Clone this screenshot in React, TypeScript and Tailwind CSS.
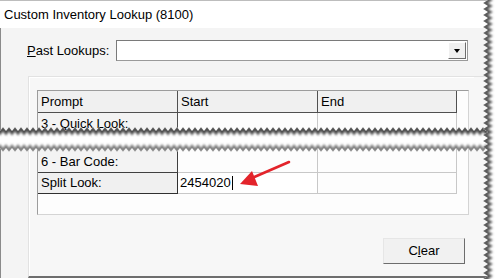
import React from 'react'

const FONT = { fontFamily: '"Liberation Sans", Arial, sans-serif' }

// zigzag points along x from x0..x1 with period p, alternating between yA and yB
function zigX(x0: number, x1: number, p: number, yA: number, yB: number) {
  const pts: string[] = []
  let i = 0
  for (let x = x0; x <= x1 + p; x += p / 2) {
    pts.push(`${x},${i % 2 === 0 ? yA : yB}`)
    i++
  }
  return pts
}

function zigY(y0: number, y1: number, p: number, xA: number, xB: number) {
  const pts: string[] = []
  let i = 0
  for (let y = y0; y <= y1 + p; y += p / 2) {
    pts.push(`${i % 2 === 0 ? xA : xB},${y}`)
    i++
  }
  return pts
}

function Tear() {
  const top = zigX(-3, 500, 6, 5, 9)
  const bottom = zigX(-3, 500, 6, 30, 26)
  const shape = [...top, ...[...bottom].reverse()].join(' ')
  const topShadow = zigX(-3, 500, 6, 6.5, 10.5).join(' ')
  const botShadow = zigX(-3, 500, 6, 28.5, 24.5).join(' ')
  return (
    <svg className="absolute left-0 top-[122px]" width="495" height="36" viewBox="0 0 495 36">
      <defs>
        <filter id="tb" x="-5%" y="-100%" width="110%" height="300%">
          <feGaussianBlur stdDeviation="1.1" />
        </filter>
        <clipPath id="tc">
          <polygon points={shape} />
        </clipPath>
      </defs>
      <polygon points={shape} fill="#ffffff" />
      <g clipPath="url(#tc)">
        <polyline points={topShadow} fill="none" stroke="#4a4a4a" strokeWidth="3.5" filter="url(#tb)" />
        <polyline points={botShadow} fill="none" stroke="#7a7a7a" strokeWidth="3" filter="url(#tb)" />
      </g>
    </svg>
  )
}

function RightEdge() {
  const edge = zigY(-3, 285, 6, 483, 488)
  const shape = [...edge, '500,285', '500,-3'].join(' ')
  const shadow = zigY(-3, 285, 6, 484.5, 489.5).join(' ')
  return (
    <svg className="absolute left-0 top-0" width="495" height="279" viewBox="0 0 495 279">
      <defs>
        <filter id="rb" x="-100%" y="-5%" width="300%" height="110%">
          <feGaussianBlur stdDeviation="1.1" />
        </filter>
        <clipPath id="rc">
          <polygon points={shape} />
        </clipPath>
      </defs>
      <polygon points={shape} fill="#ffffff" />
      <g clipPath="url(#rc)">
        <polyline points={shadow} fill="none" stroke="#555555" strokeWidth="3.5" filter="url(#rb)" />
      </g>
    </svg>
  )
}

function Arrow() {
  return (
    <svg className="absolute left-0 top-0" width="495" height="279" viewBox="0 0 495 279">
      <line x1="289" y1="162" x2="252" y2="178" stroke="#e3242b" strokeWidth="2.6" strokeLinecap="round" />
      <polygon points="240,184 252,171 258,186" fill="#e3242b" />
    </svg>
  )
}

export default function App() {
  return (
    <div className="relative w-[495px] h-[279px] overflow-hidden bg-white text-[13px] text-black" style={FONT}>
      <div className="w-[490px] h-[278px] flex flex-col border-t border-[#bdbdbd]">
        {/* Title bar */}
        <div className="h-[27px] flex items-center pl-[4px] bg-white">Custom Inventory Lookup (8100)</div>

        {/* Body */}
        <div className="flex-1 flex flex-col bg-[#f4f4f4] border-l border-[#8a8a8a]">
          <div className="flex items-center mt-[12px] pl-[26px]">
            <span className="w-[89px]"><span className="underline">P</span>ast Lookups:</span>
            <div className="w-[352px] h-[21px] bg-white border border-[#9a9a9a] border-t-[#7a7a7a] border-l-[#7a7a7a] flex justify-end items-center pr-[1px]">
              <div className="w-[18px] h-[17px] bg-[#f0f0f0] border border-[#ffffff] border-r-[#6d6d6d] border-b-[#6d6d6d] flex items-center justify-center">
                <div className="w-0 h-0 border-l-[3.5px] border-r-[3.5px] border-t-[4px] border-l-transparent border-r-transparent border-t-black" />
              </div>
            </div>
          </div>

          {/* Group panel */}
          <div className="flex-1 mt-[15px] ml-[27px] bg-[#f7f7f7] border-t border-l border-[#e2e2e2] border-b-2 border-b-[#6e6e6e]">
            <div className="h-full border-t border-l border-white pl-[7px] pt-[12px] flex flex-col w-[445px]">
              {/* Grid */}
              <div className="w-[432px] h-[125px] bg-[#fdfdfd] border border-[#9c9c9c] border-r-[#d4d4d4] border-b-[#d4d4d4]">
                <div className="grid grid-cols-[140px_140px_139px]">
                  {['Prompt', 'Start', 'End'].map(h => (
                    <div key={h} className="h-[22px] flex items-center pl-[3px] bg-[#f0f0f0] border-r border-b border-[#505050]">
                      {h}
                    </div>
                  ))}

                  <div className="h-[22px] flex items-center pl-[3px] bg-[#f3f3f3] border-r border-[#505050]">3 - Quick Look:</div>
                  <div className="h-[22px] border-r border-[#c8c8c8]" />
                  <div className="h-[22px] border-r border-[#c8c8c8]" />

                  <div className="h-[16px] bg-[#f3f3f3] border-r border-[#505050]" />
                  <div className="h-[16px] border-r border-[#c8c8c8]" />
                  <div className="h-[16px] border-r border-[#c8c8c8]" />

                  <div className="h-[22px] flex items-center pl-[3px] bg-[#f3f3f3] border-r border-b border-[#404040]">6 - Bar Code:</div>
                  <div className="h-[22px] border-r border-b border-[#c8c8c8]" />
                  <div className="h-[22px] border-r border-b border-[#c8c8c8]" />

                  <div className="h-[21px] flex items-center pl-[3px] bg-[#f0f0f0] border-r border-b border-[#303030]">Split Look:</div>
                  <div className="h-[21px] flex items-center pl-[2px] bg-white border-r border-b border-[#c8c8c8]">
                    2454020<span className="w-px h-[14px] bg-black ml-[1px]" />
                  </div>
                  <div className="h-[21px] border-r border-b border-[#c8c8c8]" />
                </div>
              </div>

              <div className="w-[432px] flex justify-end mt-[23px] pr-[4px]">
                <button className="w-[82px] h-[26px] bg-[#f1f1f1] border border-[#e6e6e6] border-r-[#6d6d6d] border-b-[#6d6d6d] flex items-center justify-center">
                  C<span className="underline">l</span>ear
                </button>
              </div>
            </div>
          </div>
        </div>
      </div>

      <Tear />
      <RightEdge />
      <Arrow />
    </div>
  )
}
